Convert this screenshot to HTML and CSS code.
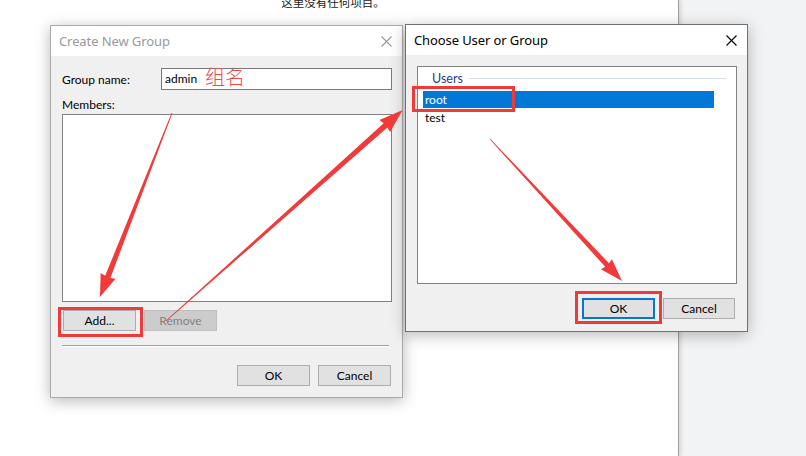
FILE: index.html
```html
<!DOCTYPE html>
<html>
<head>
<meta charset="utf-8">
<link rel="stylesheet" href="styles.css">
</head>
<body>
<div class="desktop">
  <div class="page">
    <div class="empty-msg">这里没有任何项目。</div>
  </div>
  <div class="side"></div>

  <div class="dlg dlg-left">
    <div class="titlebar inactive">
      <span class="title">Create New Group</span>
      <svg class="close" width="11" height="11" viewBox="0 0 11 11"><path d="M0.5 0.5 L10.5 10.5 M10.5 0.5 L0.5 10.5" stroke="currentColor" stroke-width="1.1" fill="none"/></svg>
    </div>
    <div class="dlg-body">
      <div class="name-row">
        <span class="lbl lbl-name">Group name:</span>
        <div class="input">admin</div>
      </div>
      <div class="lbl lbl-members">Members:</div>
      <div class="listbox members"></div>
      <div class="btn-row">
        <div class="btn">Add...</div>
        <div class="btn disabled">Remove</div>
      </div>
      <div class="sep"></div>
      <div class="btn-row end">
        <div class="btn">OK</div>
        <div class="btn">Cancel</div>
      </div>
    </div>
  </div>

  <div class="dlg dlg-right">
    <div class="titlebar">
      <span class="title">Choose User or Group</span>
      <svg class="close" width="11" height="11" viewBox="0 0 11 11"><path d="M0.5 0.5 L10.5 10.5 M10.5 0.5 L0.5 10.5" stroke="currentColor" stroke-width="1.1" fill="none"/></svg>
    </div>
    <div class="dlg-body2">
      <div class="listbox users">
        <div class="group-head"><span>Users</span><i></i></div>
        <div class="item selected">root</div>
        <div class="item second">test</div>
      </div>
      <div class="btn-row end2">
        <div class="btn focused">OK</div>
        <div class="btn">Cancel</div>
      </div>
    </div>
  </div>

  <div class="note">组名</div>
  <div class="mark mark-add"></div>
  <div class="mark mark-root"></div>
  <div class="mark mark-ok"></div>

  <svg class="arrows" width="806" height="456" viewBox="0 0 806 456">
    <g fill="#f23a3a">
      <polygon transform="translate(172 113) rotate(111.4)" points="0,-0.4 176,-2.8 175,-8 197.6,0 175,8 176,2.8 0,0.4"/>
      <polygon transform="translate(166 321) rotate(-41.7)" points="0,-0.4 294,-2.8 293,-8 317,0 293,8 294,2.8 0,0.4"/>
      <polygon transform="translate(490 139) rotate(47.1)" points="0,-0.4 172,-2.6 171,-7.5 194,0 171,7.5 172,2.6 0,0.4"/>
    </g>
  </svg>
</div>
</body>
</html>
```

FILE: styles.css
```css
* { box-sizing: border-box; }
html, body { margin: 0; padding: 0; }
body {
  width: 806px;
  height: 456px;
  overflow: hidden;
  font-family: "Lato", "Noto Sans", sans-serif;
  font-size: 12px;
  color: #000;
}
.desktop {
  position: relative;
  width: 806px;
  height: 456px;
  display: flex;
  background: #f2f3f5;
}
.page {
  width: 679px;
  height: 456px;
  background: #fff;
  border-right: 1px solid #9c9c9c;
  box-shadow: 2px 0 4px rgba(0,0,0,0.12);
}
.side { flex: 1; }
.empty-msg {
  margin-top: -5px;
  text-align: center;
  padding-right: 12px;
  font-family: "Noto Sans CJK SC", sans-serif;
  font-size: 11.5px;
  color: #222;
  line-height: 15px;
}

/* dialogs: windows on a desktop */
.dlg {
  position: absolute;
  background: #f0f0f0;
  box-shadow: 0 3px 14px rgba(0,0,0,0.28);
  display: flex;
  flex-direction: column;
}
.dlg-left {
  left: 50px;
  top: 25px;
  width: 353px;
  height: 373px;
  border: 1px solid #aaaaaa;
}
.dlg-right {
  left: 405px;
  top: 24px;
  width: 343px;
  height: 308px;
  border: 1px solid #707070;
}
.titlebar {
  height: 30px;
  background: #fff;
  display: flex;
  align-items: center;
  justify-content: space-between;
  padding: 0 10px 0 8px;
  flex-shrink: 0;
}
.titlebar .title {
  font-size: 13px;
  color: #000;
  font-family: "Noto Sans", sans-serif;
  letter-spacing: -0.1px;
}
.titlebar.inactive .title { color: #999; }
.titlebar .close { color: #000; }
.titlebar.inactive .close { color: #999; }

.dlg-body {
  padding: 12px 10px 0 11px;
  display: flex;
  flex-direction: column;
}
.name-row {
  display: flex;
  align-items: center;
}
.lbl-name { width: 99px; }
.input {
  width: 231px;
  height: 22px;
  border: 1px solid #7a7a7a;
  background: #fff;
  padding: 3px 0 0 3px;
  line-height: 14px;
}
.lbl-members {
  margin-top: 7px;
  height: 17px;
  line-height: 16px;
}
.listbox {
  background: #fff;
  border: 1px solid #828282;
}
.members {
  width: 330px;
  height: 188px;
  margin-left: 0;
}
.btn-row {
  display: flex;
  gap: 8px;
  margin-top: 8px;
  margin-left: 1px;
}
.btn-row.end {
  justify-content: flex-end;
  margin-top: 18px;
  margin-right: 1px;
}
.btn {
  width: 73px;
  height: 21px;
  background: #e1e1e1;
  border: 1px solid #adadad;
  display: flex;
  align-items: center;
  justify-content: center;
  line-height: 14px;
}
.btn.disabled {
  background: #cccccc;
  border-color: #bfbfbf;
  color: #838383;
}
.btn.focused {
  border: 2px solid #0078d7;
}
.sep {
  margin-top: 14px;
  width: 327px;
  height: 2px;
  border-top: 1px solid #a0a0a0;
  border-bottom: 1px solid #fff;
}

.dlg-body2 {
  padding: 11px 10px 0 11px;
  display: flex;
  flex-direction: column;
}
.users {
  width: 320px;
  height: 218px;
  padding: 4px 0 0 5px;
}
.group-head {
  display: flex;
  align-items: center;
  height: 15px;
  padding-left: 9px;
  color: #1e3c96;
  font-size: 12.5px;
}
.group-head i {
  flex: 0 0 257px;
  height: 1px;
  background: #d4dce6;
  margin-left: 6px;
}
.item {
  width: 291px;
  height: 17px;
  line-height: 17px;
  padding-left: 2px;
}
.item.selected {
  margin-top: 5px;
  background: #0078d7;
  color: #fff;
}
.item.second { margin-top: 1px; }
.btn-row.end2 {
  justify-content: flex-end;
  margin-top: 14px;
  gap: 8px;
  margin-right: 2px;
}
.end2 .btn:last-child { width: 72px; }

/* annotations */
.note {
  position: absolute;
  left: 205px;
  top: 64px;
  font-family: "Noto Sans CJK SC", sans-serif;
  font-weight: 300;
  font-size: 20px;
  line-height: 26px;
  color: #ef4a4a;
}
.mark {
  position: absolute;
  border: 3px solid #f03a3a;
}
.mark-add { left: 58px; top: 307px; width: 85px; height: 30px; }
.mark-root { left: 412px; top: 86px; width: 103px; height: 26px; }
.mark-ok { left: 575px; top: 291px; width: 87px; height: 33px; }
.arrows {
  position: absolute;
  left: 0;
  top: 0;
  pointer-events: none;
}
```
